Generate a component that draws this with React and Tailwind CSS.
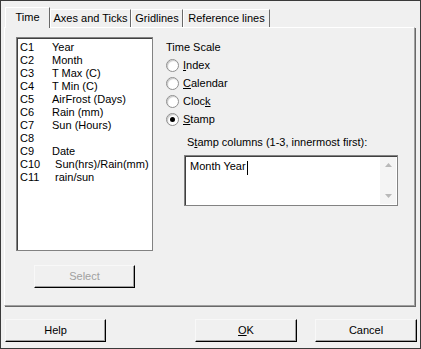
const columns = [
  ['C1', 'Year'],
  ['C2', 'Month'],
  ['C3', 'T Max (C)'],
  ['C4', 'T Min (C)'],
  ['C5', 'AirFrost (Days)'],
  ['C6', 'Rain (mm)'],
  ['C7', 'Sun (Hours)'],
  ['C8', ''],
  ['C9', 'Date'],
  ['C10', '\u00a0Sun(hrs)/Rain(mm)'],
  ['C11', '\u00a0rain/sun'],
];

const tabs = [
  ['Axes and Ticks', 'w-[81px]'],
  ['Gridlines', 'w-[52px]'],
  ['Reference lines', 'w-[87px]'],
];

function Radio({ checked, children }) {
  return (
    <div className="flex h-[18px] items-center">
      <span className="flex h-[13px] w-[13px] items-center justify-center rounded-full border border-[#8f8f8f] bg-white shadow-[inset_1px_1px_1px_#c8c8c8]">
        {checked && <span className="h-[5px] w-[5px] rounded-full bg-black" />}
      </span>
      <span className="ml-[4px]">{children}</span>
    </div>
  );
}

function Button({ children, className, disabled }) {
  return (
    <button
      className={
        'flex h-[23px] items-center justify-center border-t border-l border-[#f8f8f8] border-r border-b border-r-black border-b-black bg-[#f0f0f0] shadow-[inset_-1px_-1px_0_#a0a0a0] ' +
        (disabled ? 'text-[#a0a0a0] ' : 'text-black ') +
        className
      }
    >
      {children}
    </button>
  );
}

export default function App() {
  return (
    <div
      className="flex h-[349px] w-[421px] flex-col border border-[#3a3a3a] bg-[#f0f0f0] text-[11px] leading-none text-black"
      style={{ fontFamily: '"Liberation Sans", Arial, sans-serif' }}
    >
      {/* tabs */}
      <div className="flex h-[26px] items-end pl-[4px] pt-[6px]">
        <div className="relative z-10 -mb-px flex h-[21px] w-[45px] items-center justify-center border-t border-l border-white border-r border-r-[#696969] bg-[#f0f0f0] pb-[2px]">
          Time
        </div>
        {tabs.map(([t, w]) => (
          <div
            key={t}
            className={'flex h-[18px] items-center justify-center border-t border-l border-white border-r border-r-[#696969] ' + w}
          >
            {t}
          </div>
        ))}
      </div>

      {/* panel */}
      <div className="ml-[3px] mr-[5px] flex h-[279px] border-t border-l border-white border-r border-b border-r-[#a0a0a0] border-b-[#a0a0a0] shadow-[1px_1px_0_#696969] pl-[11px] pt-[9px]">
        <div className="flex w-[137px] flex-col">
          <div className="h-[214px] border border-[#828282] bg-white pl-[3px] pt-[3px] shadow-[inset_1px_1px_0_#404040]">
            {columns.map(([c, n]) => (
              <div key={c} className="flex h-[13px] items-center">
                <span className="w-[32px]">{c}</span>
                <span>{n}</span>
              </div>
            ))}
          </div>
          <div className="mt-[14px] pl-[18px]">
            <Button disabled className="w-[101px]">Select</Button>
          </div>
        </div>

        <div className="ml-[13px] flex flex-col pt-[5px]">
          <div className="mb-[3px]">Time Scale</div>
          <Radio><u>I</u>ndex</Radio>
          <Radio><u>C</u>alendar</Radio>
          <Radio>Cloc<u>k</u></Radio>
          <Radio checked><u>S</u>tamp</Radio>
          <div className="ml-[21px] mt-[9px]">S<u>t</u>amp columns (1-3, innermost first):</div>
          <div className="ml-[18px] mt-[7px] flex h-[51px] w-[214px] border border-[#828282] bg-white shadow-[inset_1px_1px_0_#404040]">
            <div className="flex flex-1 items-start pl-[5px] pt-[5px]">
              Month Year<span className="ml-px h-[14px] w-px bg-black" />
            </div>
            <div className="my-[1px] mr-[1px] flex w-[16px] flex-col items-center justify-between bg-[#f4f4f4] py-[6px]">
              <svg width="7" height="4" viewBox="0 0 7 4"><path d="M0 4 L3.5 0 L7 4 Z" fill="#b8b8b8" /></svg>
              <svg width="7" height="4" viewBox="0 0 7 4"><path d="M0 0 L3.5 4 L7 0 Z" fill="#b8b8b8" /></svg>
            </div>
          </div>
        </div>
      </div>

      {/* bottom buttons */}
      <div className="mt-[13px] flex pl-[4px]">
        <Button className="w-[101px]">Help</Button>
        <Button className="ml-[89px] w-[102px]"><u>O</u>K</Button>
        <Button className="ml-[18px] w-[102px]">Cancel</Button>
      </div>
    </div>
  );
}
